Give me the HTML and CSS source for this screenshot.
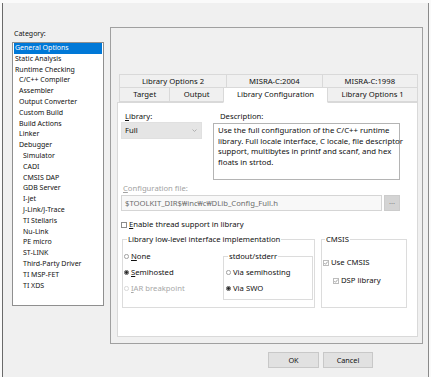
FILE: index.html
```html
<!DOCTYPE html>
<html lang="en">
<head>
    <meta charset="UTF-8">
    <title>Options</title>
    <link rel="stylesheet" href="styles.css">
</head>
<body>
    <div class="window">
        <!-- Category list -->
        <aside class="sidebar">
            <div class="caption">Category:</div>
            <ul class="category-list">
                <li class="selected">General Options</li>
                <li>Static Analysis</li>
                <li>Runtime Checking</li>
                <li class="sub">C/C++ Compiler</li>
                <li class="sub">Assembler</li>
                <li class="sub">Output Converter</li>
                <li class="sub">Custom Build</li>
                <li class="sub">Build Actions</li>
                <li class="sub">Linker</li>
                <li class="sub">Debugger</li>
                <li class="sub2">Simulator</li>
                <li class="sub2">CADI</li>
                <li class="sub2">CMSIS DAP</li>
                <li class="sub2">GDB Server</li>
                <li class="sub2">I-jet</li>
                <li class="sub2">J-Link/J-Trace</li>
                <li class="sub2">TI Stellaris</li>
                <li class="sub2">Nu-Link</li>
                <li class="sub2">PE micro</li>
                <li class="sub2">ST-LINK</li>
                <li class="sub2">Third-Party Driver</li>
                <li class="sub2">TI MSP-FET</li>
                <li class="sub2">TI XDS</li>
            </ul>
        </aside>

        <!-- Options panel -->
        <section class="panel">
            <div class="tabs">
                <div class="tab-row">
                    <div class="tab">Library Options 2</div>
                    <div class="tab">MISRA-C:2004</div>
                    <div class="tab">MISRA-C:1998</div>
                </div>
                <div class="tab-row">
                    <div class="tab">Target</div>
                    <div class="tab">Output</div>
                    <div class="tab active">Library Configuration</div>
                    <div class="tab">Library Options 1</div>
                </div>
            </div>

            <div class="page">
                <div class="lib-row">
                    <div>
                        <div class="field-label"><u>L</u>ibrary:</div>
                        <div class="combo">
                            <span>Full</span>
                            <svg class="arrow" width="5" height="3" viewBox="0 0 5 3"><path d="M0.5 0.5 L2.5 2.5 L4.5 0.5" stroke="#b0b0b0" fill="none"/></svg>
                        </div>
                    </div>
                    <div class="desc-col">
                        <div class="field-label">Description:</div>
                        <div class="desc-box">
                            Use the full configuration of the C/C++ runtime<br>
                            library. Full locale interface, C locale, file descriptor<br>
                            support, multibytes in printf and scanf, and hex<br>
                            floats in strtod.
                        </div>
                    </div>
                </div>

                <div class="config">
                    <div class="config-label"><u>C</u>onfiguration file:</div>
                    <div class="config-row">
                        <div class="config-input">$TOOLKIT_DIR$₩inc₩c₩DLib_Config_Full.h</div>
                        <div class="browse">...</div>
                    </div>
                </div>

                <div class="check-row thread">
                    <svg class="box" width="6" height="6" viewBox="0 0 6 6"><rect x="0.5" y="0.5" width="5" height="5" fill="#fff" stroke="#8c8c8c"/></svg>
                    <span><u>E</u>nable thread support in library</span>
                </div>

                <div class="groups">
                    <fieldset class="group low-level">
                        <legend>Library low-level interface implementation</legend>
                        <div class="low-level-body">
                            <div class="radio-list">
                                <div class="radio-row">
                                    <svg width="5" height="5" viewBox="0 0 5 5"><circle cx="2.5" cy="2.5" r="2.1" fill="#fff" stroke="#8c8c8c" stroke-width="0.8"/></svg>
                                    <span><u>N</u>one</span>
                                </div>
                                <div class="radio-row">
                                    <svg width="5" height="5" viewBox="0 0 5 5"><circle cx="2.5" cy="2.5" r="2.1" fill="#fff" stroke="#444" stroke-width="0.8"/><circle cx="2.5" cy="2.5" r="1.4" fill="#222"/></svg>
                                    <span><u>S</u>emihosted</span>
                                </div>
                                <div class="radio-row disabled">
                                    <svg width="5" height="5" viewBox="0 0 5 5"><circle cx="2.5" cy="2.5" r="2.1" fill="#fff" stroke="#cfcfcf" stroke-width="0.8"/></svg>
                                    <span><u>I</u>AR breakpoint</span>
                                </div>
                            </div>
                            <fieldset class="group stdout">
                                <legend>stdout/stderr</legend>
                                <div class="radio-list">
                                    <div class="radio-row">
                                        <svg width="5" height="5" viewBox="0 0 5 5"><circle cx="2.5" cy="2.5" r="2.1" fill="#fff" stroke="#8c8c8c" stroke-width="0.8"/></svg>
                                        <span>Via semihosting</span>
                                    </div>
                                    <div class="radio-row">
                                        <svg width="5" height="5" viewBox="0 0 5 5"><circle cx="2.5" cy="2.5" r="2.1" fill="#fff" stroke="#444" stroke-width="0.8"/><circle cx="2.5" cy="2.5" r="1.4" fill="#222"/></svg>
                                        <span>Via SWO</span>
                                    </div>
                                </div>
                            </fieldset>
                        </div>
                    </fieldset>

                    <fieldset class="group cmsis">
                        <legend>CMSIS</legend>
                        <div class="check-row">
                            <svg class="box" width="6" height="6" viewBox="0 0 6 6"><rect x="0.5" y="0.5" width="5" height="5" fill="#fff" stroke="#bcbcbc"/><path d="M1.3 3.1 L2.5 4.3 L4.7 1.6" stroke="#9a9a9a" fill="none" stroke-width="0.9"/></svg>
                            <span>Use CMSIS</span>
                        </div>
                        <div class="check-row dsp">
                            <svg class="box" width="6" height="6" viewBox="0 0 6 6"><rect x="0.5" y="0.5" width="5" height="5" fill="#fff" stroke="#bcbcbc"/><path d="M1.3 3.1 L2.5 4.3 L4.7 1.6" stroke="#9a9a9a" fill="none" stroke-width="0.9"/></svg>
                            <span>DSP library</span>
                        </div>
                    </fieldset>
                </div>
            </div>
        </section>

        <div class="buttons">
            <button class="btn ok">OK</button>
            <button class="btn cancel">Cancel</button>
        </div>
    </div>
</body>
</html>
```

FILE: styles.css
```css
* {
    box-sizing: border-box;
}
body {
    margin: 0;
    background-color: #fafafa;
    font-family: "Noto Sans", sans-serif;
    font-size: 7px;
    line-height: 11px;
    color: #111;
}
u {
    text-decoration-thickness: 1px;
    text-underline-offset: 1px;
}
.window {
    margin: 3px 0 0 2px;
    width: 427px;
    height: 374px;
    border-left: 1px solid #6a6a6a;
    border-right: 1px solid #8a8a8a;
    background-color: #f0f0f0;
    display: grid;
    grid-template-columns: 92px 313px;
    column-gap: 6px;
    align-content: start;
    padding: 24px 0 0 9px;
}

/* Category list */
.caption {
    padding: 1px 0 0 2px;
    margin-bottom: 3px;
}
.category-list {
    list-style: none;
    margin: 0;
    padding: 0 1px;
    height: 264px;
    border: 1px solid #8f8f8f;
    background-color: #fff;
}
.category-list li {
    height: 10.8px;
    line-height: 10.8px;
    padding-left: 1px;
    white-space: nowrap;
}
.category-list li.sub {
    padding-left: 5px;
}
.category-list li.sub2 {
    padding-left: 9px;
}
.category-list li.selected {
    background-color: #0078d7;
    color: #fff;
}

/* Panel and tabs */
.panel {
    height: 317px;
    border: 1px solid #a0a0a0;
    padding: 46px 4px 0 6px;
    font-size: 7.7px;
}
.tabs {
    padding-left: 3px;
}
.tab-row {
    display: flex;
    height: 14px;
}
.tab-row + .tab-row {
    margin-top: -1px;
    height: 15px;
}
.tab {
    flex: auto;
    text-align: center;
    line-height: 12px;
    white-space: nowrap;
    background-color: #f0f0f0;
    border: 1px solid #d9d9d9;
    margin-left: -1px;
}
.tab.active {
    background-color: #fff;
    border-bottom-color: #fff;
    margin-bottom: -1px;
    position: relative;
    z-index: 1;
}
.page {
    height: 235px;
    border: 1px solid #d9d9d9;
    background-color: #fff;
    padding: 8px 10px 0 3px;
}

/* Library + description */
.lib-row {
    display: grid;
    grid-template-columns: 81px 187px;
    column-gap: 11px;
}
.field-label {
    padding-left: 4px;
}
.desc-col .field-label {
    padding-left: 7px;
}
.combo {
    height: 17px;
    display: flex;
    align-items: center;
    justify-content: space-between;
    padding: 0 4px 0 3px;
    background-color: #e5e5e5;
    border: 1px solid #e0e0e0;
}
.desc-box {
    margin-top: 1px;
    height: 57px;
    border: 1px solid #b4b4b4;
    padding: 1px 4px 0;
    line-height: 10.6px;
    font-size: 7.8px;
    white-space: nowrap;
}

/* Configuration file */
.config {
    margin-top: 3px;
}
.config-label {
    color: #a2a2a2;
    padding-left: 2px;
}
.config-row {
    display: flex;
    gap: 2px;
    margin-top: 1px;
}
.config-input {
    width: 261px;
    height: 16px;
    border: 1px solid #d5d5d5;
    background-color: #f8f8f8;
    color: #6d6d6d;
    padding-left: 3px;
    line-height: 14px;
    white-space: nowrap;
}
.browse {
    width: 16px;
    height: 16px;
    background-color: #d4d4d4;
    border: 1px solid #cccccc;
    color: #8a8a8a;
    text-align: center;
    line-height: 11px;
}

/* Checkboxes and radios */
.check-row,
.radio-row {
    display: flex;
    align-items: center;
    height: 11px;
    white-space: nowrap;
}
.check-row {
    gap: 2px;
}
.radio-row {
    gap: 2px;
}
.check-row svg,
.radio-row svg {
    flex: none;
}
.thread {
    margin-top: 8px;
}
.radio-list {
    display: flex;
    flex-direction: column;
    gap: 5px;
}
.disabled {
    color: #a8a8a8;
}

/* Group boxes */
.groups {
    margin-top: 4px;
    margin-left: 1px;
    display: flex;
    gap: 6px;
}
.group {
    margin: 0;
    border: 1px solid #dcdcdc;
    min-width: 0;
}
.group legend {
    padding: 0 1px;
    margin-left: 3px;
    line-height: 11px;
    white-space: nowrap;
}
.low-level {
    width: 193px;
    padding: 6px 1px 7px 1px;
}
.low-level-body {
    display: grid;
    grid-template-columns: 1fr 90px;
}
.stdout {
    padding: 5px 2px 5px 2px;
}
.stdout legend {
    margin-left: 2px;
}
.cmsis {
    width: 86px;
    padding: 12px 1px 0 1px;
}
.cmsis legend {
    margin-left: 2px;
}
.cmsis .dsp {
    margin-top: 7px;
    margin-left: 10px;
}

/* Dialog buttons */
.buttons {
    grid-column: 1 / -1;
    display: flex;
    justify-content: flex-end;
    gap: 4px;
    margin: 8px 50px 0 0;
}
.btn {
    height: 16px;
    padding: 0;
    font-family: inherit;
    font-size: 7.3px;
    line-height: 14px;
    color: #111;
    background-color: #e1e1e1;
    border: 1px solid #c8c8c8;
}
.btn.ok {
    width: 51px;
}
.btn.cancel {
    width: 50px;
}
```
